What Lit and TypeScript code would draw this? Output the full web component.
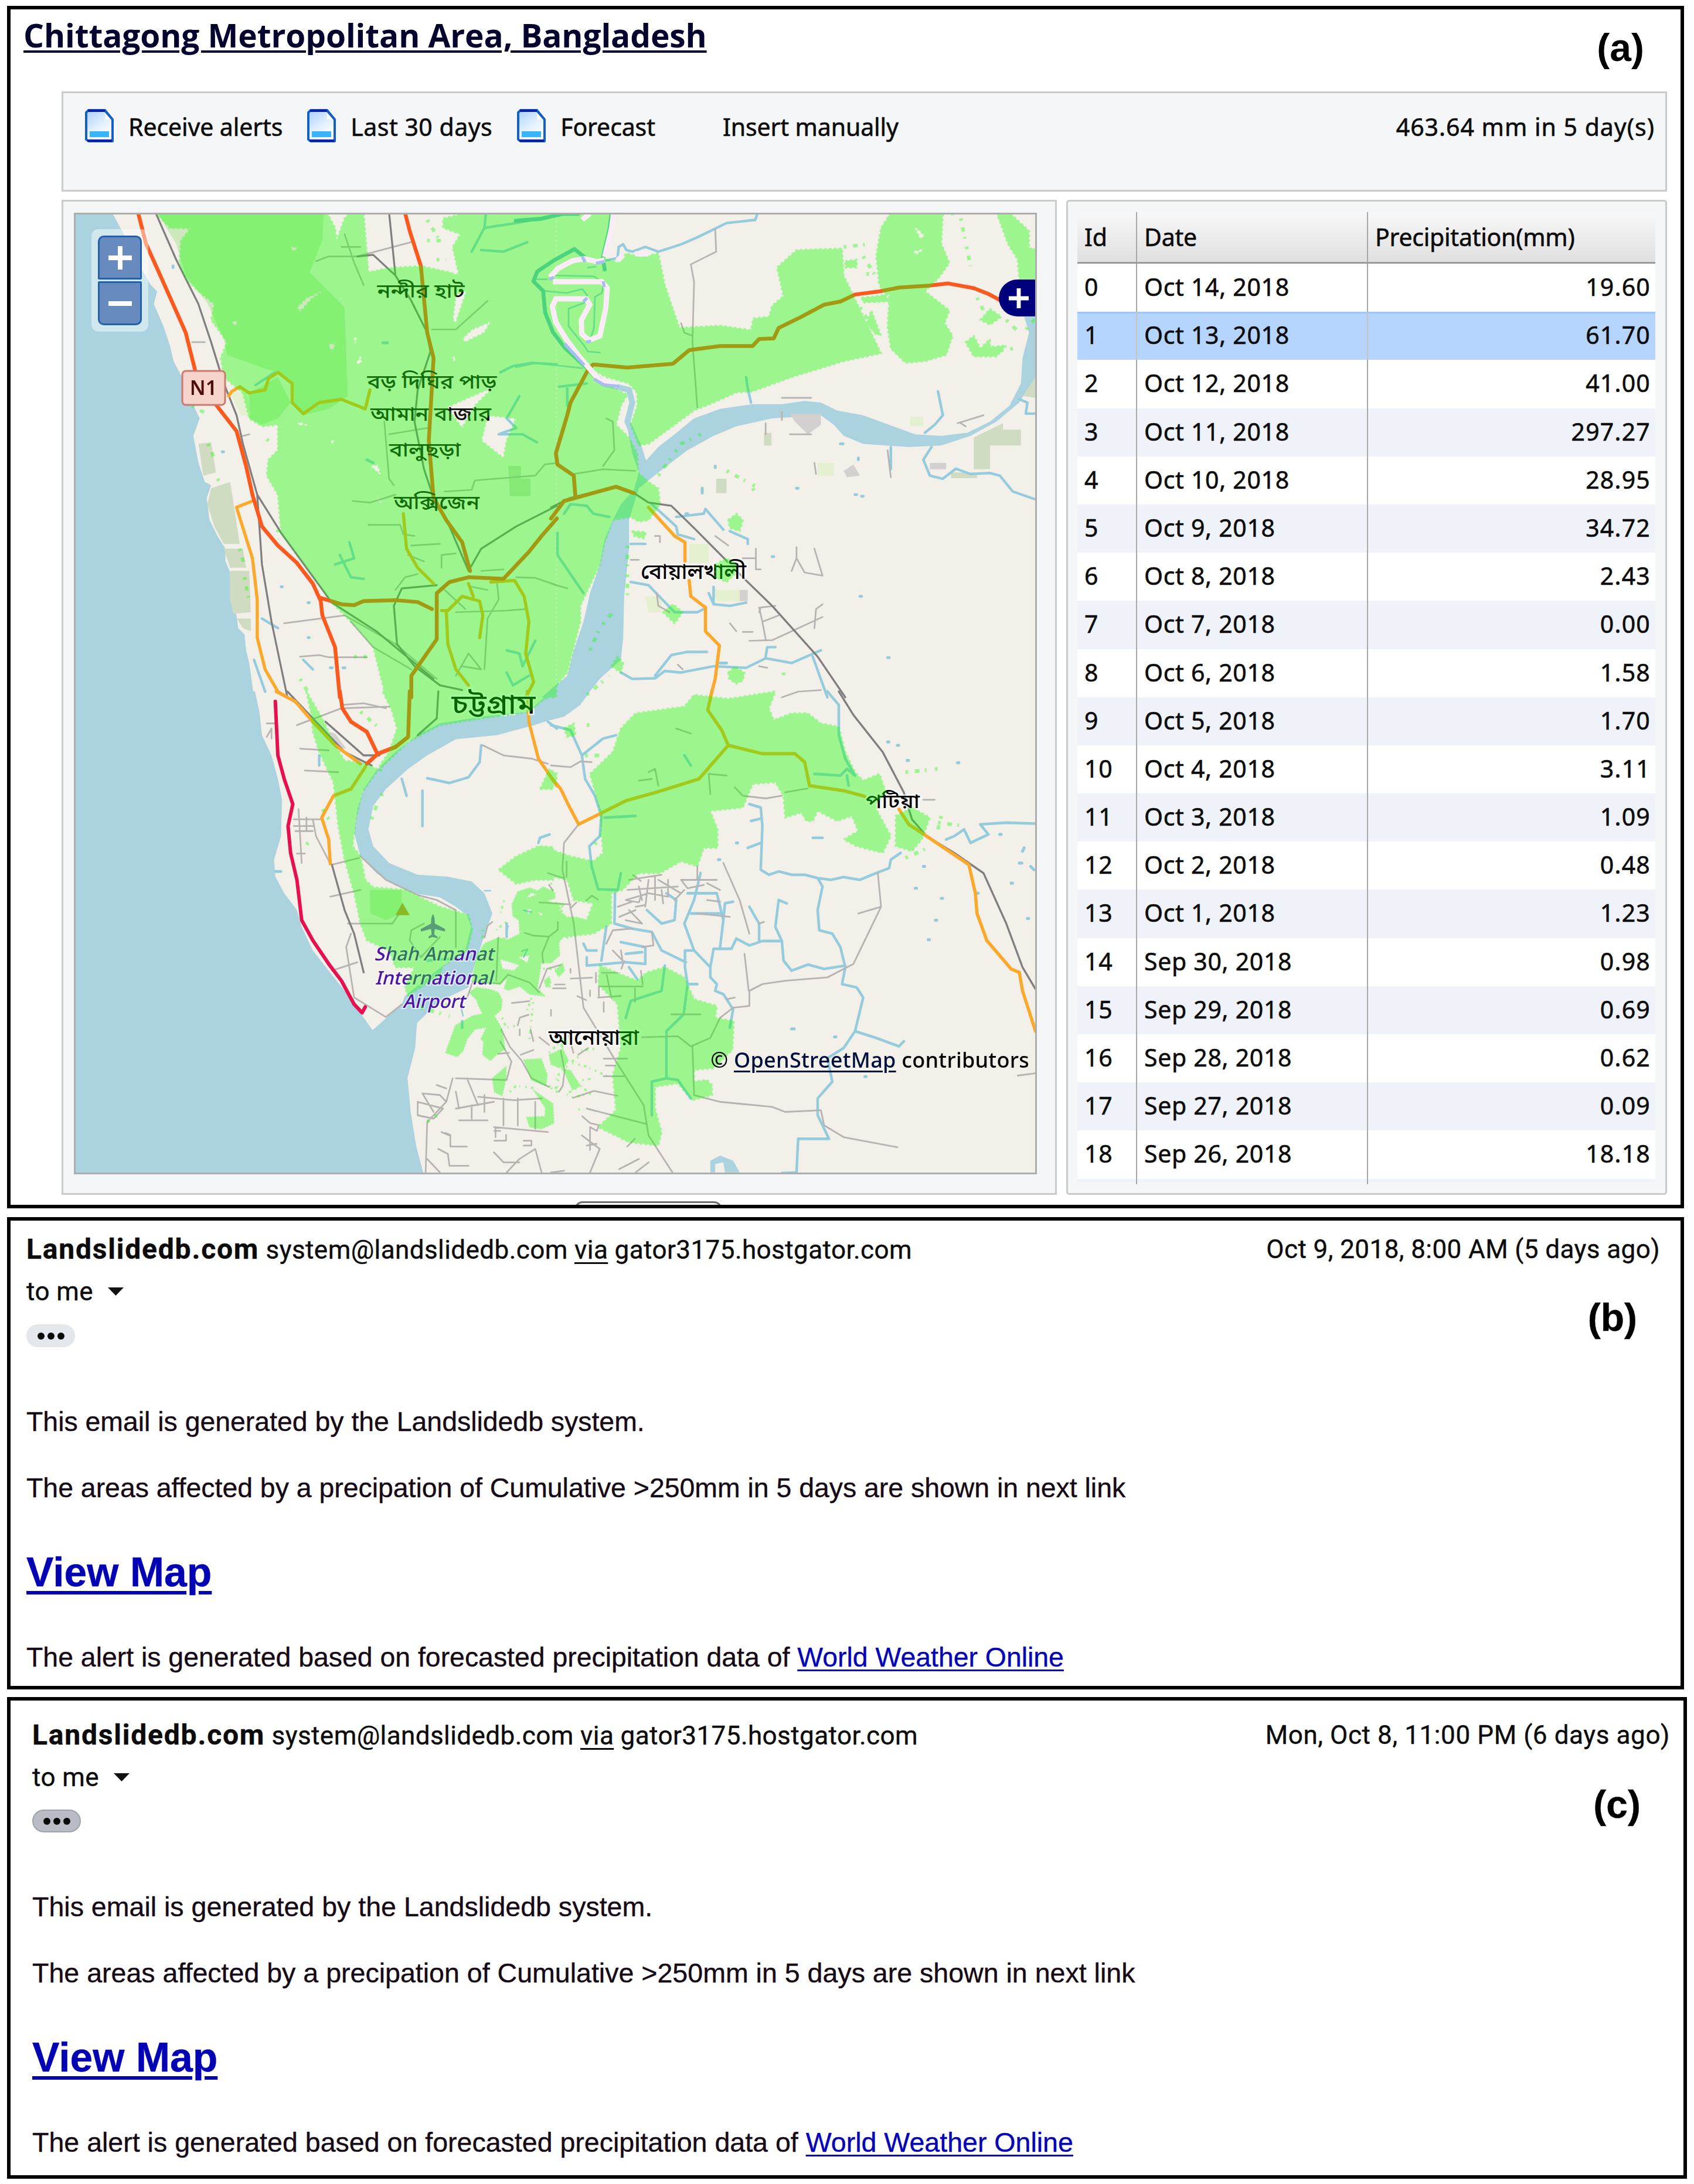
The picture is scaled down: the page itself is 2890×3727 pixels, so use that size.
import { LitElement, html, svg, css } from 'lit';
import { customElement, property } from 'lit/decorators.js';
import { classMap } from 'lit/directives/class-map.js';

// The map is split in four sheets plus two detail sheets, each one with its own local grid
const SHEETS = {
  nw: 'matrix(0.5421 0 0 0.5421 100 340)',
  ne: 'matrix(0.5548 0 0 0.5421 940 340)',
  sw: 'matrix(0.5421 0 0 0.574 100 1180)',
  se: 'matrix(0.5548 0 0 0.574 940 1180)',
  bend: 'matrix(0.3333 0 0 0.3333 880 360)',
  south: 'matrix(0.3333 0 0 0.3333 760 1440)',
};

type SheetKey = keyof typeof SHEETS;
type Layer = { kind: string } & Partial<Record<SheetKey, string>>;

// Drawn bottom to top
const BASE_LAYERS: Layer[] = [
  {
    kind: 'water',
    nw: 'M40 30L168 42L200 100L250 200L290 270L310 290L300 330L330 400L350 460L362 510L388 560L420 640L444 690L424 745L440 830L460 890L480 900L466 940L475 1010L500 1060L525 1100V1140L540 1175V1260L560 1310L565 1350L585 1370L590 1420L600 1460L615 1568H40ZM1575 1520L1520 1568H1575Z',
    ne: 'M1455 370L1470 420L1450 500L1445 580L1410 650L1350 700L1280 735L1200 745L1120 740L1040 710L960 680L880 665L830 640L780 635L710 645H620L520 660L440 690L380 740L330 780L290 825L275 770L235 720L250 800L270 860L255 915L215 960L190 1010L165 1070L150 1150L120 1240L100 1330L70 1420L50 1500L0 1545V1575H100L150 1510L215 1450L222 1380L225 1250L240 1100V1010L270 910L330 860L420 790L500 745L570 715L680 690L830 680L870 710L900 745L960 770L1100 780L1200 775L1290 745L1370 700L1440 640L1490 560V370Z',
    sw: 'M40 0H618L632 60L640 130L670 190L690 260L703 320L700 430L678 500L682 550L710 600L750 650L765 700L800 770L850 830L900 890L960 970L988 1007L1080 930L1090 905L1150 860L1210 815L1280 770L1298 700L1285 665L1250 640L1200 612L1130 602L1060 577L1000 540L950 490L930 420L940 350L960 290L1000 235L1060 180L1130 130L1200 95L1330 75L1480 60L1525 20L1545 0H1580V75L1490 102L1380 130L1250 142L1160 190L1100 230L1030 290L990 340L975 410L990 460L1040 510L1130 545L1220 550L1300 565L1340 600L1365 660L1335 740L1310 810L1290 880L1200 920L1128 985L1122 1060L1098 1150L1108 1250L1125 1350L1150 1440H40Z',
    se: 'M0 0H120L90 40L40 75L0 85ZM490 1430V1395L520 1380L560 1395L580 1430H535L530 1400L505 1405V1430Z',
  },
  {
    kind: 'wood',
    nw: 'M310 42H835L830 130L790 230L900 340L910 620L850 660L770 680L730 640L735 580L690 545L640 530L530 490L520 440L470 330L400 240L370 140ZM600 610L690 560L730 640L690 690L640 710L600 690Z',
    sw: 'M980 590H1080V660L1030 680L980 660Z',
  },
  {
    kind: 'marsh',
    nw: 'M440 770L480 765L495 860L455 870ZM480 910L540 890L570 1085H520L490 1030L468 960ZM520 1100H580L590 1160H540ZM540 1170H600L605 1300L550 1305L540 1260ZM560 1320H605V1360L580 1350ZM1415 840H1455V880H1485V935H1420Z',
    ne: 'M1300 750L1390 705V775H1350V850H1300ZM1370 725H1445V775H1370ZM508 880H540V925H508ZM1450 620L1490 560V625ZM1230 860H1310V878H1230ZM655 735H678V775H655Z',
  },
  {
    kind: 'grass',
    nw: 'M540 610L590 605L605 680H575Z',
    ne: 'M425 1085H485V1145H425ZM290 1250H340V1300H300ZM1105 685H1145V715H1105ZM500 1230H580V1265H510ZM820 830H870V870H820Z',
  },
  {
    kind: 'works',
    ne: 'M735 675H830V710L790 740L750 700ZM900 855L930 835L950 870L910 875ZM580 1230H605V1265H580ZM1165 830H1215V850H1165Z',
    sw: 'M850 120L870 125L905 170L885 170Z',
  },
  {
    kind: 'stream',
    nw: 'M1345 42L1340 90L1440 75L1568 50M1340 90L1300 165M1330 160L1400 165L1475 135M1390 545L1430 525L1490 515L1568 520M1450 620L1410 690L1440 720L1385 740L1460 740L1505 765M885 1120L920 1190L960 1195M870 1150L930 1130L915 1080M620 585L680 545M640 1320L690 1350M615 1450L650 1550M770 1450L800 1480M1410 1420L1450 1430L1460 1470L1500 1390M1410 1490L1430 1530L1480 1500',
    ne: 'M635 45L628 65L540 75L500 95L450 120L400 142L330 165L290 150L250 165L232 160L222 142L208 150L205 185L160 195M600 560L605 595L615 640M1190 605L1205 680L1180 710L1150 735M1045 780V850M1170 780L1145 820L1165 870L1205 880L1245 848L1290 865L1350 862L1380 870L1420 920L1490 945M1440 630L1465 640L1460 675H1490M310 960L385 1030L390 1055L440 1070M385 1000L470 990L475 975L530 1040M550 1045L605 1070V1085M245 1205L300 1215L380 1300H450L470 1290M485 1240L500 1275L550 1280L600 1270M500 1220V1270M215 1490L250 1510L320 1508L350 1485L400 1490L500 1470L600 1475L660 1445L740 1460L830 1420M320 1500L370 1435L420 1425H480M660 1440L665 1410H690M805 1440L850 1568M245 1085H290M20 1050V1120L60 1180L100 1240M40 990L60 960L110 965L130 990L180 1000M25 590L110 580M50 590V650',
    sw: 'M1330 160L1325 210L1290 255L1230 272L1160 258M1145 295V400M1080 260L1095 310M1540 90L1568 110M1510 450L1515 435L1545 425M682 535H700M1160 800L1300 790M1410 690V730M1270 980V1000M820 190V220',
    se: 'M0 100L60 115L95 190L105 260L135 310L155 370L150 430L118 460L125 520L145 588L205 590L215 540M95 190L160 140L200 130M197 600L195 690L250 705L310 715L340 770L415 805M850 0L885 40V130L905 200L935 250L910 230L890 250L810 245M910 250L915 280M610 335L645 345L650 400L645 530L670 545L700 535L740 545L780 545L820 555L860 560L900 552L950 560L1000 540L1040 525L1045 500L1075 480M605 465L645 450M615 385L645 378M820 555L835 580L820 650L825 710L865 720L890 760L905 820L895 870L940 880L960 910L935 1010L900 1060L850 1090L865 1160L820 1210V1260L855 1330H760L755 1430L710 1432M935 1010L1000 1030L1070 1055L1085 1040M905 815L840 825L790 812L740 830L715 800L710 742H650L610 755L570 735L555 765H500M710 742L690 700L700 620L725 630M640 745V690L610 640M500 765L490 820L440 770H412V820L420 870L408 960L355 1010V1150L310 1160V1260M490 820V850L510 870L505 890L530 900L560 945L550 1000M440 770L410 690L440 620L460 540M295 650L340 690L380 680L385 620L355 600M520 760L530 680L510 600H420M530 680L535 630L560 625M430 660H530M155 800L170 700M110 815L230 805L290 810V760L215 745M230 780L280 775M100 750L110 770L140 770M110 790V815M240 820L265 855M1215 440L1240 430L1270 410L1290 450L1345 425L1320 395L1400 390L1490 393M350 815L340 890L245 920L230 970M355 1150L390 1155L430 1210M165 375L260 370M410 190L430 220M420 870H450M805 435H835',
    bend: 'M200 330L400 335L450 370L440 420L405 440L400 600L380 660M150 410L260 420L340 400L365 430L350 470L270 500V590L350 690L370 720L430 725M0 800L100 780L250 795L340 805M90 350H160M370 290L410 285',
    south: 'M400 340L440 350M390 550L420 540L400 580M320 420L310 460M80 840L90 880M200 240H230',
  },
  { kind: 'channel', bend: 'M0 50L130 40L240 15H320M490 15L480 90L445 240L455 300M350 235L300 195L200 250L110 310L90 360L140 410L150 520L190 620L250 700L370 810' },
  { kind: 'river', ne: 'M115 535L160 580L240 600L250 640L235 700L270 780L285 830' },
  {
    kind: 'pond',
    nw: 'M360 210v5M515 795h4M700 1220h4M785 1270h4M785 1380h4M855 1475h6M895 1475h6M1020 452h15M970 820l20 10',
    ne: 'M680 1125h5M950 1250h5M1035 1443h5M755 910h5M935 930h5M955 935h5M890 770h8M465 910v15M505 840v5M945 815v5M520 1460h20M415 990h5',
    se: 'M1035 150h4M1065 160h4M1095 205h4M1250 212h4M740 1003h8M872 1027h4M1160 738h4M1182 680h4M1200 615h4M1145 520h4M1120 585h4M1380 425h4M1455 465l-5 10M1440 510h8M1475 520l10 10M1415 570h4M1465 675h4M965 1145h4M1310 600h4M570 450h4M515 500h4',
  },
  {
    kind: 'lane',
    nw: 'M810 195L850 180H940L1110 135M1175 410H1250L1350 320M1025 700L1040 880L1055 900M925 950L980 955L1060 930M1215 920L1300 915L1310 885L1500 870L1530 835L1568 830M975 1025H1075L1085 1055L1120 1060M1060 1230L1090 1190L1130 1180M1250 1300L1410 1295L1470 1290M710 1335L900 1310M760 1440L820 1435L850 1442H970M1440 1190L1500 1192L1568 1215M1380 1210L1385 1260L1350 1320L1340 1480M1250 1500L1290 1430L1330 1480L1270 1470M1110 1090L1200 1085M1205 1160V1120L1250 1115M1215 1230L1280 1290M900 1310L1060 1400L1190 1510M920 1330L990 1410L1110 1480M420 450H460M900 110L930 200L960 270M890 150H950M1300 1220L1350 1230M1330 1170L1400 1165M1100 1120L1150 1140M580 745L600 740M1040 740L1100 730L1160 720',
    ne: 'M505 95L508 165L430 205L440 260L435 450L450 655M400 390L410 420L435 430M170 690L190 700L195 790L160 840M70 865L160 850L260 855M640 1300L645 1285L690 1280M640 1285L650 1330L700 1310M650 1330L660 1385M610 1390L680 1388L740 1360L835 1315M810 1350L815 1290L835 1275M740 1170L755 1130L755 1095M755 1130L780 1175L835 1185L810 1100M590 1130H630V1100M630 1130V1165H645M1250 705L1330 680M1260 705L1275 715M710 625H800M1035 790L1045 875M810 830L815 865M710 1568L760 1550L830 1545M320 1060H335V1080M245 1135H270M325 1240L330 1280L365 1300M550 1335L570 1360M590 1362H620M390 1465L405 1480M640 1470L665 1475M505 1060L545 1090M0 1210L50 1225M710 670V695M660 705V740M735 740H800',
    sw: 'M750 100L890 50L1040 45M890 40L960 35L1030 50M760 170L850 175M775 235L880 240M740 380H830M740 400H800M755 350L765 510M745 415H800M780 375V415M800 380L810 430L855 512M750 482H775M860 515L945 495M855 610L950 590M910 690L1050 690L1080 650M920 720L905 760L930 910L1030 968L1080 930M860 830L940 805M950 490L1030 560L1130 605L1190 620L1250 650L1250 760M1335 160L1400 190L1490 200L1540 215M1105 740L1110 710L1150 690M1105 740L1140 790L1200 730M1240 1150L1220 1220L1160 1280L1155 1430M1250 1150L1410 1155L1425 1100L1390 1040M1285 1150L1320 1230M1250 1240L1370 1220M1250 1190L1260 1240M1130 1220L1210 1240L1180 1270L1130 1260ZM1145 1195L1200 1200L1220 1220M1145 1195L1180 1250M1260 1275H1350M1300 1230V1270M1370 1295L1540 1310M1375 1295V1325M1400 1210V1290M1445 1210V1290M1500 1220V1300M1195 1360L1225 1375L1230 1410H1290M1320 1205L1430 1215L1520 1210M1410 1430L1450 1390L1500 1360L1520 1430M1340 1200V1250M1160 1390L1200 1430M1370 1370L1400 1400L1450 1400M655 95H680M655 135L670 110V140M1205 1310L1230 1320M1190 1170L1220 1180',
    se: 'M85 395L40 450L35 530L70 690L100 940L200 1100L285 1230L300 1320L375 1432M0 220L60 225L90 208L125 210M565 285L590 310L660 318L710 310M720 300L790 288M530 510L580 620L610 720M1005 540L1015 640L960 750L930 810L850 850L720 860L650 870L610 890V935L560 940L520 970L490 1030L430 1055L390 1025L280 1028M1015 640L945 660M595 780L608 890M435 1055L440 1200L520 1220L680 1235L720 1250L830 1245L840 1290L900 1325L1065 1355M110 1240L290 1285M145 910L215 905M370 960H460M95 1320L150 1360L120 1430M1435 1142L1490 1135M1145 322H1180M300 240L320 230L330 280M270 265L310 260M490 305L485 245L540 250M385 110L430 125M230 620L300 600L360 610M240 560L340 545M240 650L280 690L230 680M300 560L290 640M330 560L400 600M400 560H510M400 560L420 585L470 575M380 620L410 590M450 660L550 670M480 620L520 625M235 590L390 580M320 550V620M360 560V610M260 640L290 635M210 670L260 650M170 750L190 710L250 705M310 715L315 755L280 760M190 770L220 800L215 770M110 1350L140 1345M0 1430L40 1425M210 1420L270 1390M260 1430L300 1400M540 915L565 910M640 690L655 685M450 520V560M480 570L520 590M205 640L250 625M270 580L280 620M340 590L345 630',
  },
  {
    kind: 'path',
    south: 'M405 455L450 470L530 475L575 440V400M530 475L495 560L500 610M480 300L640 310M640 330L670 300M720 290L750 265L780 285M270 480L260 700M110 790L140 705L280 715L320 670L430 710L480 760M480 740L520 640L590 620M340 815L430 805M370 930L380 890L425 875M380 950V980M435 950L450 1010M480 990L530 1030M540 850V880M270 1075L325 1070M285 950L330 1040L390 1110L440 1200L530 1245M385 1080L450 1055M630 980L655 1070M680 1080L730 1045M810 1100H930M820 1135H870M810 1190H915M640 640V660M640 690L750 685M560 720H610M550 740H615M675 780L720 800M740 750V780M785 730V780M810 810V860M770 660V710M790 730H1010M800 660H880M825 670L850 790M530 210L550 240M590 1060L610 1160L600 1240L580 1270M655 1300L760 1265L880 1290M700 1395L740 1430L785 1440L775 1470L740 1450V1568M250 1470H280M310 1490V1520H250M400 1520H440V1545H400M970 1510L930 1550M0 1480L25 1490V1550H110M525 150L600 175M200 480L215 420L240 400M915 600L900 640M620 90V170M970 740V810M1000 650L1010 720M960 160L1000 190M930 290L990 300L1000 270',
  },
  {
    kind: 'rail',
    nw: 'M305 42L370 190L440 330L480 450L520 580L560 680L580 770L625 930L640 1150L670 1330L720 1568M625 930L700 1050L860 1270L1000 1360L1180 1510M1040 42L1060 240M940 180L990 175L1060 240L1110 320L1160 420L1170 480L1130 600L1120 700L1150 850L1180 940L1230 1030L1290 1170L1330 1100L1440 1030L1568 965M1190 1215L1080 1225L1055 1280L1065 1400L1120 1470L1200 1530L1270 1545',
    ne: 'M0 970L60 940L200 905L255 925L300 955L370 965L440 1035L600 1200L680 1280L820 1440L905 1568',
    se: 'M885 0L930 70L1020 180L1085 300L1110 380L1155 430L1240 480L1330 540L1400 690L1450 820L1490 885',
    sw: 'M720 0L800 80L900 180L985 220M840 90L960 190L1010 190M1195 0L1190 80L1130 130M860 515L900 650L930 720L960 835',
  },
  {
    kind: 'secondary',
    nw: 'M610 950L560 970L610 1130L625 1260V1380L650 1480L690 1550L720 1568M535 620L545 605L570 590L600 610L650 600L660 565L690 545L735 580V640L770 675L820 640L890 630L965 660L980 600M1085 990L1095 1100L1130 1160L1180 1210M1220 1295L1225 1400L1250 1480L1290 1530M1205 1295H1225L1270 1250L1325 1265L1335 1310L1325 1380M1290 1210L1305 1250M1360 1205L1435 1200L1465 1250L1480 1330L1470 1430L1495 1520L1470 1568',
    ne: 'M300 970L380 1060L412 1080V1140M425 1200L430 1250L475 1285V1360L518 1405L505 1510L490 1568',
    sw: 'M685 0L745 30L800 90L870 160L950 215M965 225L920 290L865 310L828 375L850 440L855 512M1475 0L1480 90L1510 200L1568 280',
    se: 'M495 0L482 55L525 115L545 160L455 260L330 298L230 325L85 395L55 340L30 290L0 255M545 160L650 185L750 185L780 210L795 280L900 295L965 312M1070 350L1100 395L1155 430L1285 515L1305 600L1310 660L1340 740L1415 825L1440 835L1450 890L1490 1010',
  },
  {
    kind: 'trunk',
    nw: 'M250 42L275 140L320 240L400 420L430 540M490 640L560 730L590 840L610 930L640 1030L690 1090L750 1145L800 1210L825 1265L830 1310L870 1410L885 1568M1090 42L1105 100L1140 210L1160 420L1180 500L1165 760L1180 940L1220 1010L1270 1080L1295 1170M825 1255L890 1275L930 1278L960 1265L1060 1262L1130 1268L1175 1290M1110 1568V1500L1190 1385V1240L1230 1205L1290 1190L1400 1195L1480 1110L1520 1060L1568 1005',
    ne: 'M0 1005L40 950L200 905L255 925M75 935L70 870L20 835L15 800L50 680L60 640L115 535L130 520L235 530L375 518L425 475L520 462L620 462L640 440L685 438L700 405L770 370L840 332L890 322L935 300L1010 290L1070 278L1160 272L1220 265L1300 280L1345 298L1385 320',
    sw: 'M885 0L893 50L920 90L970 120L1003 185M1105 0L1100 135L1060 165L1005 185L970 215',
  },
  { kind: 'motorway', sw: 'M682 30L690 190L710 260L737 335L722 400L730 480L750 560L765 680L800 740L850 810L890 860L930 930L955 955L965 938' },
  { kind: 'peak', sw: 'M1060 665L1082 628L1105 665Z' },
  { kind: 'plane', sw: 'M1178 662Q1184 668 1184 690L1216 706V714L1184 706L1182 722L1192 729V734L1178 730L1164 734V729L1174 722L1172 706L1140 714V706L1172 690Q1172 668 1178 662Z' },
];

// Area above the alert threshold
const ALERT_LAYERS: Layer[] = [
  {
    kind: 'alert',
    nw: 'M305 42H845L870 90L875 130L900 60L915 42H960L975 230L1020 220L1060 215L1140 210L1230 230L1260 240L1240 150L1265 110L1210 90V60L1290 42H1566V1568H1030L990 1410L940 1350L900 1310L860 1270L790 1170L700 1050L690 930L655 870L660 820L690 790V710L640 715L600 690L580 610L520 560L510 500L530 450L480 380L490 330L440 290L400 250L380 200L385 130L415 92L350 90ZM1270 440L1300 410L1360 385L1340 420L1280 450ZM1330 760L1350 680L1440 690L1410 760L1400 815ZM1220 655L1300 620L1370 590L1310 650L1270 720ZM980 840L1005 835L1015 870ZM750 340L780 310L850 280L800 310L760 355ZM1240 380L1250 300L1285 285L1250 390ZM755 700L800 715L750 710ZM1000 930L1020 960L1005 950ZM845 460L870 450L865 480ZM930 430L940 440L930 460ZM935 520L950 490L955 515ZM540 390L560 380L565 400ZM725 150L755 150L740 165ZM880 290L905 345L890 320ZM850 765L870 755L865 770ZM1235 495L1250 495L1245 515Z',
    ne: 'M17 42H190L165 185L205 200L232 170L280 182L330 170L350 270L395 405L520 398L615 412L622 375L670 370L680 335L715 305L695 215L755 160L895 155L900 240L1015 485L900 510L740 560L620 605L570 608L500 640L440 665L380 710L300 770L270 775L245 710L265 650V610L240 580L170 560L125 535L110 540L180 590L235 615L215 650L200 710L240 750L265 800L268 860L300 890L330 910L335 960L300 1010L270 1015L245 1000L190 1010L165 1080L150 1150L90 1280L90 1330L50 1490L17 1530ZM1045 42H1205L1200 140L1225 200L1190 250L1150 290L1225 350L1210 390L1235 430L1215 490L1150 510L1090 515L1045 470L1035 400L1040 320L1010 270L1000 180L1015 90ZM1115 85L1130 95L1150 115L1135 125ZM1110 165L1150 155L1125 175ZM1370 42H1410L1470 100V155H1490V255H1440L1435 190L1405 140ZM1320 380L1350 345L1385 370L1350 395ZM1275 450L1300 430L1320 470L1350 440V465L1400 460L1370 495H1300ZM545 1010L570 990L590 1010L580 1045L550 1035ZM505 1150L540 1130L570 1150L565 1180L540 1205L505 1190ZM345 1300L375 1275L405 1300L380 1335ZM545 1490L565 1472L595 1490L590 1515L570 1525L548 1510ZM250 1045L292 1048L285 1068L255 1060ZM185 1470L205 1440L222 1460L215 1490ZM905 195L940 190V215H905ZM955 310L1040 300V322L960 325ZM970 390L985 350L1000 390L1015 430L990 415Z',
    sw: 'M1020 0H1558V8L1525 25L1480 60L1330 80L1200 100L1100 150L1000 240L955 300L935 380L925 460L950 490L965 560L990 582L1090 590L1200 640L1290 665L1302 710L1285 770L1210 815L1200 840L1100 905L1090 880L1120 820L1060 820L1040 770L970 740L950 690L930 600L900 500L880 400L865 270L820 180L800 120L795 70L780 0L830 80L870 160L900 205L965 215L1015 235L1010 220L1040 180L1065 110L1050 60ZM1385 530L1440 490L1510 460L1556 462V560L1500 560L1440 572ZM1515 290L1545 230L1556 240V290Z',
    se: 'M120 245L190 180L215 110L260 65L410 45L440 10L545 22L690 0L670 50L685 85L740 65H790L830 95L885 105L905 180L935 240L960 265L1010 245L1030 300L1000 330L1000 350L1045 430L1020 480L940 460L900 440L945 415L925 370L880 385L820 355L805 385H785L770 360L720 375L715 310L690 270L620 275L590 345L490 355L512 410V465L470 465L450 520L400 505L335 540L270 540L220 590L185 600V690L130 720L40 730L0 750V680L110 680L130 630L70 620L50 560L0 550V470L60 490L130 505L160 480L150 350ZM1060 370L1110 345L1165 375L1140 440L1110 475L1060 460ZM150 815L200 835L265 860L295 835L350 820L410 850L440 915L510 935L505 970L562 980L558 1065L500 1120L440 1125V1160L480 1155L495 1170V1200L435 1215L390 1165L320 1175L320 1240L340 1310L330 1350L240 1340L145 1295L200 1245L190 1140L215 1060L205 930L145 870ZM0 235L18 245L15 275L0 270ZM40 110L70 95L75 130L50 135Z',
    south: 'M370 245L430 225L470 240L500 220L560 250V280L520 290L600 320L580 340L620 375H670L760 400L700 440L610 445L580 510L585 570L540 610L490 610L480 680L470 740L510 780L430 770L380 730L320 750L300 740L320 680L280 720L135 705L160 570L200 510L270 480L320 490L380 460L375 390L345 370L340 310ZM410 280L470 260L440 250ZM410 340L440 330L430 360ZM470 350L500 355L490 370ZM370 580L430 570L420 610ZM280 590L380 620L350 650L290 640ZM120 760L160 735L225 745L270 760L290 800L285 850L250 880L290 950L305 1050L260 1080L230 1110L190 1080L195 1010L180 1000L210 940L150 950L110 1000L90 1060L60 1090L0 1070L50 930L140 880L190 870L165 820L160 800ZM400 1105L490 1100L520 1180L515 1240L440 1210ZM240 1200L310 1140V1200L290 1290L250 1270ZM450 1260L550 1330L555 1430L490 1460L430 1450L415 1400L510 1395V1350ZM530 1080L600 1050L630 1110L600 1150L540 1130ZM600 1150L640 1160L690 1240L650 1260ZM560 650L600 610L610 650L580 680ZM505 700L530 680L540 710L515 735ZM565 300L610 310L590 330Z',
  },
  {
    kind: 'specks',
    nw: 'M470 770L490 815M500 880L515 905M570 1100L585 1155M585 1190L600 1265M1160 65L1200 130M1160 130H1220M1190 190H1220M655 755L665 765M760 1510L790 1560M690 1040V1070M420 650L465 675M930 1440H970',
    ne: 'M900 150L990 140M960 180L1010 260M970 235H990M950 340L1010 440M1260 60L1290 210M1310 310L1340 370M1400 380L1440 420M1460 410L1490 375M330 870L400 770L480 730M235 1090V1250M120 1420L150 1350L190 1300M540 855L640 910M110 1560L180 1500M620 910L630 925M715 1490V1510M1110 45H1240M1420 470L1360 480',
    sw: 'M1140 940L1230 965M985 380L1000 340M950 60L1010 110M780 455L800 435M1160 1280L1190 1260M1015 310L1030 290M830 350L850 380',
    se: 'M0 600L40 700M1090 240L1190 230M1190 390L1270 400M1090 495L1170 460M135 455L160 420M105 190H155M110 100H120M0 660L50 670M1200 370L1190 410',
    south: 'M530 1070L600 1000L590 1060L620 1140L540 1120L640 1180L690 1240L620 1280L640 1300L740 1280L660 1210M540 1250L570 1270L580 1180L560 1220M680 1090L640 1120L720 1140L830 1190M760 1050L680 1060M700 1210L760 1200M680 1360H710M300 290L280 360M310 400L260 440M540 200L550 270M500 640L600 640L580 680M510 700L540 740M290 890L310 940L370 930M330 1270L360 1240L450 1250M440 790L415 860M190 440V490M430 1000L450 790M620 1010L570 1070M530 1240L600 1260M640 1230L620 1180M560 330L610 350M620 480H640M0 820L25 830M300 480L290 560',
  },
];

// Cut-outs that stay free of the overlay
const GAP_LAYERS: Layer[] = [
  { kind: 'gap', bend: 'M175 340L215 295L290 255L350 245L420 260L455 250M455 235L490 90L500 15M190 362H440L468 395L460 500L430 640L375 662L338 630L335 560L378 480L360 450L205 450L187 490L205 570L260 660L320 740L380 810L430 870L520 893M340 45L380 12M520 255L550 225M610 220H680' },
  { kind: 'brook', bend: 'M250 680L350 790M400 860L450 890L530 898M410 268L455 258M340 235L355 262M448 360L452 390M345 465L365 445M360 670L385 668M170 350L195 340' },
];

interface PlaceName {
  text: string;
  x: number;
  y: number;
  size: number;
  width: number;
  kind?: string;
}

const PLACES: PlaceName[] = [
  { text: 'নন্দীর হাট', x: 718, y: 508, size: 34, width: 149 },
  { text: 'বড় দিঘির পাড়', x: 737, y: 663, size: 34, width: 221 },
  { text: 'আমান বাজার', x: 735, y: 718, size: 34, width: 206 },
  { text: 'বালুছড়া', x: 725, y: 779, size: 34, width: 122 },
  { text: 'অক্সিজেন', x: 745, y: 869, size: 34, width: 146 },
  { text: 'চট্টগ্রাম', x: 842, y: 1218, size: 46, width: 143, kind: 'city' },
  { text: 'বোয়ালখালী', x: 1183, y: 988, size: 36, width: 180, kind: 'town' },
  { text: 'পটিয়া', x: 1523, y: 1379, size: 34, width: 92, kind: 'town' },
  { text: 'আনোয়ারা', x: 1013, y: 1783, size: 36, width: 154, kind: 'town' },
  { text: 'Shah Amanat', x: 740, y: 1639, size: 32, width: 204, kind: 'airport' },
  { text: 'International', x: 740, y: 1680, size: 32, width: 201, kind: 'airport' },
  { text: 'Airport', x: 740, y: 1720, size: 32, width: 106, kind: 'airport' },
];

const drawLayer = (layer: Layer) =>
  (Object.keys(SHEETS) as SheetKey[])
    .filter((key) => layer[key])
    .map((key) => svg`<path class=${layer.kind} transform=${SHEETS[key]} d=${layer[key]!}></path>`);

@customElement('alert-map')
export class AlertMap extends LitElement {
  static styles = css`
    :host {
      display: block;
      position: relative;
      box-sizing: border-box;
      border: 3px solid #adadad;
      overflow: hidden;
      background: #f3efe9;
    }

    .map {
      display: block;
      width: 100%;
      height: 100%;
    }

    .map path {
      fill: none;
      stroke-linecap: round;
      stroke-linejoin: round;
    }

    .map .water { fill: #aad3df; }
    .map .wood { fill: #cde8bd; }
    .map .marsh { fill: #cfdcc2; }
    .map .grass { fill: #e4f0cf; }
    .map .works { fill: #d5d0d0; }
    .map .stream { stroke: #94cbdd; stroke-width: 8; }
    .map .channel { stroke: #6fb8cf; stroke-width: 20; }
    .map .river { stroke: #aad3df; stroke-width: 18; }
    .map .pond { stroke: #94cbdd; stroke-width: 9; }
    .map .lane { stroke: #b7b3b3; stroke-width: 5; }
    .map .path { stroke: #b7b3b3; stroke-width: 8; }
    .map .rail { stroke: #7f7f7f; stroke-width: 6; }
    .map .secondary { stroke: #fba92c; stroke-width: 10; }
    .map .trunk { stroke: #fb5a1e; stroke-width: 12; }
    .map .motorway { stroke: #e6104e; stroke-width: 11; }
    .map .peak { fill: #d18f40; }
    .map .plane { fill: #8461c4; }
    .map .gap { stroke: #fcecf8; stroke-width: 27; stroke-linejoin: miter; stroke-linecap: butt; }
    .map .brook { stroke: #aabdf0; stroke-width: 16; stroke-linecap: butt; }

    .map .alert {
      fill: #16ff00;
      fill-rule: evenodd;
      stroke: #16ff00;
      stroke-width: 6;
      stroke-dasharray: 7 8;
      stroke-linecap: butt;
    }

    .map .specks {
      stroke: #16ff00;
      stroke-width: 11;
      stroke-dasharray: 8 21 14 17 5 26;
      stroke-linecap: butt;
    }

    .overlay {
      opacity: 0.39;
    }

    .place {
      font-family: 'Noto Sans Bengali', 'Noto Sans', 'FreeSans', sans-serif;
      font-weight: 500;
      text-anchor: middle;
      fill: #10100f;
    }

    .place.town,
    .place.city {
      fill: #000;
      paint-order: stroke;
      stroke: rgba(255, 255, 255, 0.7);
      stroke-width: 5px;
    }

    .place.airport {
      font-style: italic;
      fill: #4a14a4;
      paint-order: stroke;
      stroke: rgba(255, 255, 255, 0.6);
      stroke-width: 4px;
    }

    .shield {
      fill: #f6d3cb;
      stroke: #cb7a6d;
      stroke-width: 3;
    }

    .shield-text {
      font: 600 34px 'Noto Sans', sans-serif;
      fill: #4d0d0b;
      text-anchor: middle;
    }

    .zoom {
      position: absolute;
      left: 27px;
      top: 25px;
      display: flex;
      flex-direction: column;
      gap: 3px;
      padding: 11px;
      border-radius: 12px;
      background: rgba(255, 255, 255, 0.45);
    }

    .zoom-button {
      display: flex;
      align-items: center;
      justify-content: center;
      box-sizing: border-box;
      width: 75px;
      height: 75px;
      border: 3px solid #2362ab;
      border-radius: 10px 10px 2px 2px;
      background: #678bbe;
    }

    .zoom-button.out {
      border-radius: 2px 2px 10px 10px;
    }

    .glyph {
      width: 40px;
      height: 40px;
      stroke: #fff;
      stroke-width: 8;
      fill: none;
    }

    .switcher {
      position: absolute;
      right: 0;
      top: 111px;
      display: flex;
      align-items: center;
      justify-content: center;
      box-sizing: border-box;
      width: 62px;
      height: 63px;
      padding-left: 5px;
      border-radius: 32px 0 0 32px;
      background: #00007c;
    }

    .switcher .glyph {
      width: 34px;
      height: 34px;
    }

    .attribution {
      position: absolute;
      right: 10px;
      bottom: 168px;
      font: 500 36px/48px 'Noto Sans', sans-serif;
      letter-spacing: 0.28px;
      color: #000;
      white-space: nowrap;
    }

    .attribution a {
      color: #00103c;
      text-decoration: underline;
      text-decoration-thickness: 3px;
      text-underline-offset: 5px;
    }
  `;

  render() {
    return html`
      <svg class="map" viewBox="129 366 1637 1635" preserveAspectRatio="none">
        ${BASE_LAYERS.map(drawLayer)}
        ${PLACES.map(
          (p) => svg`<text class="place ${p.kind ?? ''}" x=${p.x} y=${p.y} font-size=${p.size}
            textLength=${p.width} lengthAdjust="spacingAndGlyphs">${p.text}</text>`
        )}
        <g class="overlay">${ALERT_LAYERS.map(drawLayer)}</g>
        ${GAP_LAYERS.map(drawLayer)}
        <rect class="shield" x="311" y="633" width="73" height="58" rx="6"></rect>
        <text class="shield-text" x="347" y="674">N1</text>
      </svg>
      <div class="zoom">
        <div class="zoom-button">
          <svg class="glyph" viewBox="0 0 40 40"><path d="M0 20H40M20 0V40"></path></svg>
        </div>
        <div class="zoom-button out">
          <svg class="glyph" viewBox="0 0 40 40"><path d="M0 20H40"></path></svg>
        </div>
      </div>
      <div class="switcher">
        <svg class="glyph" viewBox="0 0 40 40"><path d="M0 20H40M20 0V40"></path></svg>
      </div>
      <div class="attribution">© <a>OpenStreetMap</a> contributors</div>
    `;
  }
}

const READINGS: [string, string][] = [
  ['Oct 14, 2018', '19.60'],
  ['Oct 13, 2018', '61.70'],
  ['Oct 12, 2018', '41.00'],
  ['Oct 11, 2018', '297.27'],
  ['Oct 10, 2018', '28.95'],
  ['Oct 9, 2018', '34.72'],
  ['Oct 8, 2018', '2.43'],
  ['Oct 7, 2018', '0.00'],
  ['Oct 6, 2018', '1.58'],
  ['Oct 5, 2018', '1.70'],
  ['Oct 4, 2018', '3.11'],
  ['Oct 3, 2018', '1.09'],
  ['Oct 2, 2018', '0.48'],
  ['Oct 1, 2018', '1.23'],
  ['Sep 30, 2018', '0.98'],
  ['Sep 29, 2018', '0.69'],
  ['Sep 28, 2018', '0.62'],
  ['Sep 27, 2018', '0.09'],
  ['Sep 26, 2018', '18.18'],
];

@customElement('rain-table')
export class RainTable extends LitElement {
  @property({ type: Number }) selected = 1;

  static styles = css`
    :host {
      display: block;
      font: 41px/60px 'Noto Sans', Tahoma, sans-serif;
      letter-spacing: 0.7px;
      color: #0c0c0c;
      -webkit-text-stroke: 0.6px #0c0c0c;
    }

    .row {
      display: grid;
      grid-template-columns: 102px 394px 1fr;
      height: 82.2px;
      background: #fff;
    }

    .row.odd {
      background: #eff3f9;
    }

    .row.selected {
      background: #b5d5ff;
      box-shadow: inset 0 3px #9ac6fb;
    }

    .row.head {
      height: 88px;
      box-sizing: border-box;
      border-bottom: 3px solid #9b9b9b;
      background: linear-gradient(#f8f8f8, #e0e0e0);
      letter-spacing: -0.25px;
    }

    .row.stub {
      height: 6px;
    }

    .cell {
      box-sizing: border-box;
      padding: 9px 11px 0 12px;
      border-right: 2px solid #a8a8a8;
      overflow: hidden;
    }

    .head .cell {
      padding-top: 12px;
    }

    .selected .cell {
      border-color: #c9c4bb;
    }

    .cell:last-child {
      border-right: 0;
    }

    .value {
      text-align: right;
      padding-right: 8px;
      letter-spacing: 1.2px;
    }
  `;

  render() {
    return html`
      <div class="row head">
        <div class="cell">Id</div>
        <div class="cell">Date</div>
        <div class="cell">Precipitation(mm)</div>
      </div>
      ${READINGS.map(
        ([date, value], i) => html`
          <div class=${classMap({ row: true, odd: i % 2 === 1, selected: i === this.selected })}>
            <div class="cell">${i}</div>
            <div class="cell">${date}</div>
            <div class="cell value">${value}</div>
          </div>
        `
      )}
      <div class="row odd stub">
        <div class="cell"></div>
        <div class="cell"></div>
        <div class="cell"></div>
      </div>
    `;
  }
}

@customElement('alert-mail')
export class AlertMail extends LitElement {
  @property() date = '';
  @property() label = '';
  @property({ type: Boolean, reflect: true }) pressed = false;

  static styles = css`
    :host {
      display: block;
      position: relative;
      box-sizing: border-box;
      border: 6px solid #000;
      height: 806px;
      padding: 19px 35px 0 27px;
      font-family: Roboto, sans-serif;
      font-size: 44px;
      line-height: 60px;
      letter-spacing: 0.42px;
      color: #0c0c0c;
      -webkit-text-stroke: 0.4px;
      white-space: nowrap;
    }

    :host([pressed]) {
      height: 822px;
      padding: 29px 23px 0 37px;
    }

    .header {
      display: flex;
      justify-content: space-between;
    }

    .name {
      font-size: 48px;
      font-weight: 700;
      letter-spacing: 1.8px;
    }

    .via {
      text-decoration: underline;
      text-decoration-thickness: 3px;
      text-underline-offset: 6px;
    }

    :host([pressed]) .date {
      letter-spacing: 0.6px;
    }

    .recipient {
      display: flex;
      align-items: center;
      gap: 25px;
      margin-top: 11px;
    }

    .arrow {
      width: 27px;
      height: 14px;
      fill: #111;
    }

    .more {
      display: flex;
      align-items: center;
      justify-content: center;
      gap: 5px;
      width: 83px;
      height: 39px;
      margin-top: 26px;
      border-radius: 20px;
      background: #e3e6ea;
    }

    :host([pressed]) .more {
      box-sizing: border-box;
      margin-top: 25px;
      border: 2px solid #9fa3ab;
      background: #b9bcc4;
    }

    .dot {
      width: 12px;
      height: 12px;
      border-radius: 50%;
      background: #0a0a0a;
    }

    .body {
      display: flex;
      flex-direction: column;
      align-items: flex-start;
      margin-top: 97px;
      font-family: 'Liberation Sans', Arial, sans-serif;
      font-size: 46.4px;
      letter-spacing: 0;
      color: #160a16;
    }

    :host([pressed]) .body {
      font-size: 46.55px;
    }

    .line + .line {
      margin-top: 53px;
    }

    a {
      color: #0303b4;
      text-decoration: underline;
      text-decoration-thickness: 3px;
      text-underline-offset: 5px;
    }

    .view {
      margin: 74px 0 75px;
      font-size: 69.7px;
      font-weight: 700;
      line-height: 80px;
      text-decoration-thickness: 6px;
      text-underline-offset: 8px;
    }

    .label {
      position: absolute;
      right: 74px;
      top: 125px;
      font: 700 66px/80px 'Liberation Sans', Arial, sans-serif;
      letter-spacing: 0;
      color: #000;
    }

    :host([pressed]) .label {
      right: 73px;
      top: 137px;
    }
  `;

  render() {
    return html`
      <div class="header">
        <div class="from">
          <span class="name">Landslidedb.com</span>
          <span class="address">system@landslidedb.com <span class="via">via</span> gator3175.hostgator.com</span>
        </div>
        <div class="date">${this.date}</div>
      </div>
      <div class="recipient">
        to me
        <svg class="arrow" viewBox="0 0 27 14"><path d="M0 0H27L13.5 14Z"></path></svg>
      </div>
      <div class="more">
        <span class="dot"></span>
        <span class="dot"></span>
        <span class="dot"></span>
      </div>
      <div class="body">
        <div class="line">This email is generated by the Landslidedb system.</div>
        <div class="line">The areas affected by a precipation of Cumulative &gt;250mm in 5 days are shown in next link</div>
        <a class="view">View Map</a>
        <div>The alert is generated based on forecasted precipitation data of <a>World Weather Online</a></div>
      </div>
      <div class="label">${this.label}</div>
    `;
  }
}

@customElement('app-root')
export class AppRoot extends LitElement {
  static styles = css`
    :host {
      display: flex;
      flex-direction: column;
      box-sizing: border-box;
      width: 2890px;
      height: 3727px;
      padding: 10px 12px 0 12px;
      background: #fff;
    }

    .station {
      position: relative;
      box-sizing: border-box;
      width: 2861px;
      height: 2052px;
      padding: 4px 23px 0 87px;
      border: 6px solid #000;
      overflow: hidden;
    }

    .title {
      margin: 0 0 56px -65px;
      font: 700 55px/80px 'Open Sans', sans-serif;
      letter-spacing: -0.1px;
      color: #04042e;
      text-decoration: underline;
      text-decoration-thickness: 4px;
      text-underline-offset: 5px;
    }

    .box {
      box-sizing: border-box;
      border: 3px solid #c9cbcc;
      background: #f4f6f8;
    }

    .toolbar {
      display: flex;
      align-items: flex-start;
      height: 171px;
      padding: 27px 18px 0 37px;
      font: 41px/60px 'Noto Sans', Tahoma, sans-serif;
      letter-spacing: -0.1px;
      color: #0c0c0c;
      -webkit-text-stroke: 0.6px #0c0c0c;
    }

    .tool {
      display: flex;
      gap: 25px;
      margin-right: 42px;
    }

    .tool:nth-child(2) {
      letter-spacing: 0.5px;
    }

    .tool-icon {
      width: 49px;
      height: 57px;
    }

    .manual {
      margin-left: 73px;
    }

    .total {
      margin-left: auto;
      letter-spacing: 1px;
    }

    .columns {
      display: flex;
      gap: 16px;
      margin-top: 14px;
    }

    .map-box {
      width: 1698px;
      height: 1698px;
      padding: 19px 0 0 18px;
    }

    .map-box alert-map {
      width: 1643px;
      height: 1641px;
    }

    .table-box {
      flex: 1;
      height: 1698px;
      padding: 18px 17px 0 16px;
      border-radius: 5px;
    }

    .tab {
      width: 252px;
      height: 30px;
      margin: 11px 0 0 875px;
      box-sizing: border-box;
      border: 3px solid #6d6d6d;
      border-radius: 14px;
    }

    .label {
      position: absolute;
      right: 62px;
      top: 25px;
      font: 700 66px/80px 'Liberation Sans', Arial, sans-serif;
      color: #000;
    }

    .first-mail {
      width: 2861px;
      margin-top: 15px;
    }

    .second-mail {
      width: 2866px;
      margin-top: 13px;
    }
  `;

  private renderTool(text: string) {
    return html`
      <div class="tool">
        <svg class="tool-icon" viewBox="0 0 49 57">
          <defs>
            <linearGradient id="sheet" x1="0" y1="0" x2="0.6" y2="1">
              <stop offset="0" stop-color="#a9cff8"></stop>
              <stop offset="0.6" stop-color="#e4f1ff"></stop>
              <stop offset="1" stop-color="#ffffff"></stop>
            </linearGradient>
          </defs>
          <path d="M6 2H34L47 18V55H6L2 52V6Z" fill="url(#sheet)" stroke="#1460c4" stroke-width="4" stroke-linejoin="round"></path>
          <path d="M34 4V18H46Z" fill="#fff"></path>
          <path d="M34 3L47 18" stroke="#1460c4" stroke-width="4"></path>
          <rect x="8" y="38" width="33" height="10" fill="#38b4fb"></rect>
          <path d="M5 3H34M4 54H46" stroke="#0a1ea6" stroke-width="4"></path>
        </svg>
        <span>${text}</span>
      </div>
    `;
  }

  render() {
    return html`
      <section class="station">
        <h1 class="title">Chittagong Metropolitan Area, Bangladesh</h1>
        <div class="box toolbar">
          ${['Receive alerts', 'Last 30 days', 'Forecast'].map((t) => this.renderTool(t))}
          <span class="manual">Insert manually</span>
          <span class="total">463.64 mm in 5 day(s)</span>
        </div>
        <div class="columns">
          <div class="box map-box"><alert-map></alert-map></div>
          <div class="box table-box"><rain-table></rain-table></div>
        </div>
        <div class="tab"></div>
        <div class="label">(a)</div>
      </section>
      <alert-mail class="first-mail" date="Oct 9, 2018, 8:00 AM (5 days ago)" label="(b)"></alert-mail>
      <alert-mail class="second-mail" date="Mon, Oct 8, 11:00 PM (6 days ago)" label="(c)" pressed></alert-mail>
    `;
  }
}
